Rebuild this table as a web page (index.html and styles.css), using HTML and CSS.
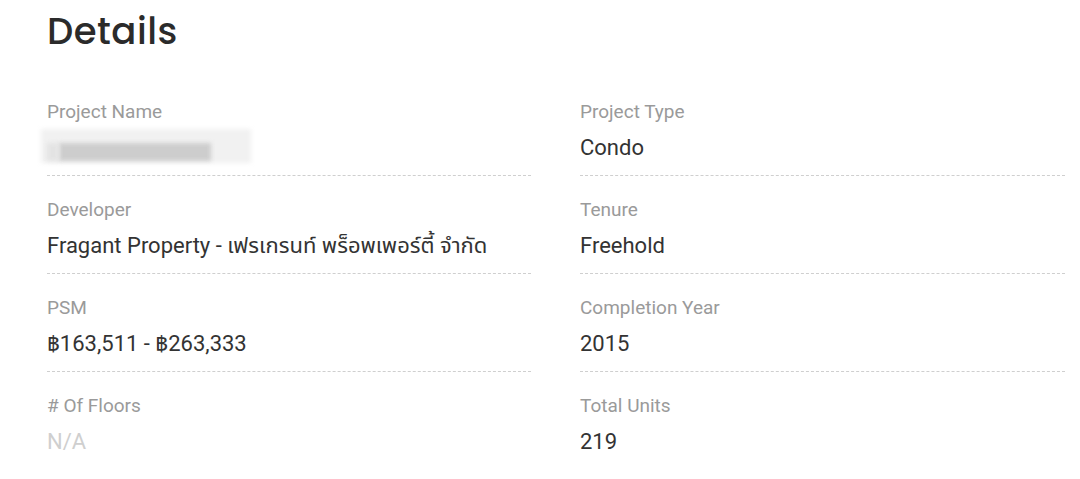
FILE: index.html
```html
<!DOCTYPE html>
<html>
<head>
<meta charset="utf-8">
<link rel="stylesheet" href="styles.css">
</head>
<body>
<div class="page">
  <h1 class="title">Details</h1>
  <div class="grid">
    <div class="item">
      <div class="label">Project Name</div>
      <div class="value blurred"><span class="b b1"></span><span class="b b2"></span><span class="b b3"></span></div>
    </div>
    <div class="item">
      <div class="label">Project Type</div>
      <div class="value">Condo</div>
    </div>
    <div class="item">
      <div class="label">Developer</div>
      <div class="value">Fragant Property - เฟรเกรนท์ พร็อพเพอร์ตี้ จำกัด</div>
    </div>
    <div class="item">
      <div class="label">Tenure</div>
      <div class="value">Freehold</div>
    </div>
    <div class="item">
      <div class="label">PSM</div>
      <div class="value">฿163,511 - ฿263,333</div>
    </div>
    <div class="item">
      <div class="label">Completion Year</div>
      <div class="value">2015</div>
    </div>
    <div class="item last">
      <div class="label">&#35; Of Floors</div>
      <div class="value na">N/A</div>
    </div>
    <div class="item last">
      <div class="label">Total Units</div>
      <div class="value">219</div>
    </div>
  </div>
</div>
</body>
</html>
```
FILE: styles.css
```css
html, body {
  margin: 0;
  padding: 0;
  background: #ffffff;
}
.page {
  padding: 4px 15px 0 47px;
  font-family: Roboto, "Noto Sans Thai", "Noto Sans", sans-serif;
}
.title {
  margin: 0;
  font-family: Poppins, Inter, "Noto Sans", sans-serif;
  font-weight: 500;
  font-size: 37px;
  line-height: 54px;
  color: #2b2b2b;
  letter-spacing: 0.5px;
}
.grid {
  margin-top: 20px;
  display: grid;
  grid-template-columns: 484px 485px;
  column-gap: 49px;
}
.item {
  padding: 24px 0 14px;
  border-bottom: 1px dashed #cfcfcf;
  display: flex;
  flex-direction: column;
  gap: 13px;
}
.item.last {
  border-bottom: none;
}
.label {
  font-size: 19px;
  line-height: 20px;
  color: #9a9a9a;
}
.value {
  font-size: 22px;
  line-height: 26px;
  color: #333333;
}
.value.na {
  color: #cfcfcf;
}
.blurred {
  position: relative;
  height: 26px;
}
.b {
  position: absolute;
  display: block;
  filter: blur(2px);
}
.b1 {
  left: -6px;
  top: -6px;
  width: 210px;
  height: 34px;
  background: #f1f1f1;
}
.b2 {
  left: 12px;
  top: 8px;
  width: 152px;
  height: 18px;
  background: #cdcdcd;
}
.b3 {
  left: 0;
  top: 8px;
  width: 12px;
  height: 18px;
  background: #e3e3e3;
}
```
